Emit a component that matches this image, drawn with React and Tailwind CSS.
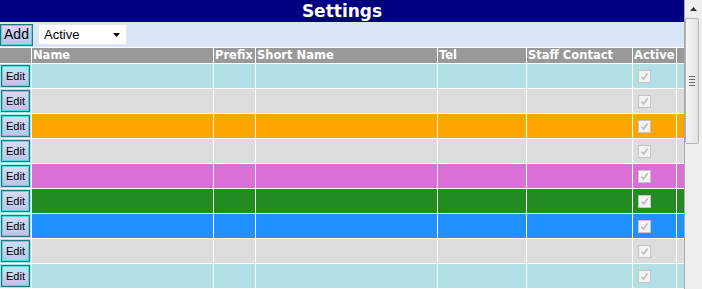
import React from "react";

const cols = "grid grid-cols-[31px_181px_41px_181px_88px_105px_43px_7px] gap-x-px";
const rows = ["bg-[#b0e0e6]", "bg-[#dcdcdc]", "bg-[#ffa500]", "bg-[#dcdcdc]", "bg-[#da70d6]", "bg-[#228b22]", "bg-[#1e90ff]", "bg-[#dcdcdc]", "bg-[#b0e0e6]"];
const headers = ["", "Name", "Prefix", "Short Name", "Tel", "Staff Contact", "Active", ""];

function Check() {
  return (
    <div className="w-[13px] h-[13px] border border-[#c4c4c4] bg-[#f3f3f3] flex items-center justify-center">
      <svg width="9" height="9" viewBox="0 0 9 9">
        <path d="M1.5 4.8 L3.6 7 L7.6 1.5" fill="none" stroke="#bcbcbc" strokeWidth="1.6" />
      </svg>
    </div>
  );
}

function OldButton({ children, cls }) {
  return (
    <div className={"border border-[#1c7c82] shadow-[inset_0_0_0_1px_#52d6d6] bg-gradient-to-b from-[#d6dcf4] to-[#b9c4ea] flex items-center justify-center text-black " + cls}>
      {children}
    </div>
  );
}

export default function App() {
  return (
    <div className="w-[702px] h-[289px] overflow-hidden flex bg-white" style={{ fontFamily: '"Liberation Sans", Arial, sans-serif' }}>
      <div className="w-[684px] flex flex-col">
        <div className="h-[22px] bg-[#000080] text-white font-bold text-[17px] leading-[22px] text-center" style={{ fontFamily: '"DejaVu Sans", Verdana, sans-serif' }}>
          Settings
        </div>
        <div className="h-[25px] bg-[#dae6f8] flex items-center">
          <OldButton cls="w-[33px] h-[22px] text-[14px] ml-0">Add</OldButton>
          <div className="ml-[5px] w-[89px] h-[21px] bg-white border border-[#e4e8ee] flex items-center pl-[5px] pr-[6px] text-[13px] text-black">
            <span className="flex-1">Active</span>
            <svg width="7" height="4" viewBox="0 0 7 4"><path d="M0 0 H7 L3.5 4 Z" fill="#000" /></svg>
          </div>
        </div>
        <div className="flex flex-col gap-y-px bg-white pt-px">
          <div className={cols + " h-[15px]"}>
            {headers.map((h, i) => (
              <div key={i} className="bg-[#999999] text-white font-bold text-[11.5px] leading-[15px] pl-px whitespace-nowrap overflow-hidden" style={{ fontFamily: '"DejaVu Sans", Verdana, sans-serif' }}>
                {h}
              </div>
            ))}
          </div>
          {rows.map((bg, r) => (
            <div key={r} className={cols + " h-[24px]"}>
              <div className="bg-[#b0e0e6] flex items-center pl-px">
                <OldButton cls="w-[29px] h-[22px] text-[11px]">Edit</OldButton>
              </div>
              <div className={bg} />
              <div className={bg} />
              <div className={bg} />
              <div className={bg} />
              <div className={bg} />
              <div className={bg + " flex items-center pl-[5px]"}>
                <Check />
              </div>
              <div className={bg} />
            </div>
          ))}
        </div>
      </div>
      <div className="w-[18px] border-l border-[#a8a8a8] bg-[#eeeeee] flex flex-col">
        <div className="h-[17px] flex items-center justify-center">
          <svg width="7" height="4" viewBox="0 0 7 4"><path d="M0 4 H7 L3.5 0 Z" fill="#333" /></svg>
        </div>
        <div className="ml-0 w-[14px] h-[126px] mt-px border border-[#b4b4b4] rounded-[2px] bg-gradient-to-r from-[#f4f4f4] to-[#e2e2e2] flex flex-col items-center justify-center gap-[2px]">
          <div className="w-[6px] h-px bg-[#666]" />
          <div className="w-[6px] h-px bg-[#666]" />
          <div className="w-[6px] h-px bg-[#666]" />
          <div className="w-[6px] h-px bg-[#666]" />
        </div>
      </div>
    </div>
  );
}
